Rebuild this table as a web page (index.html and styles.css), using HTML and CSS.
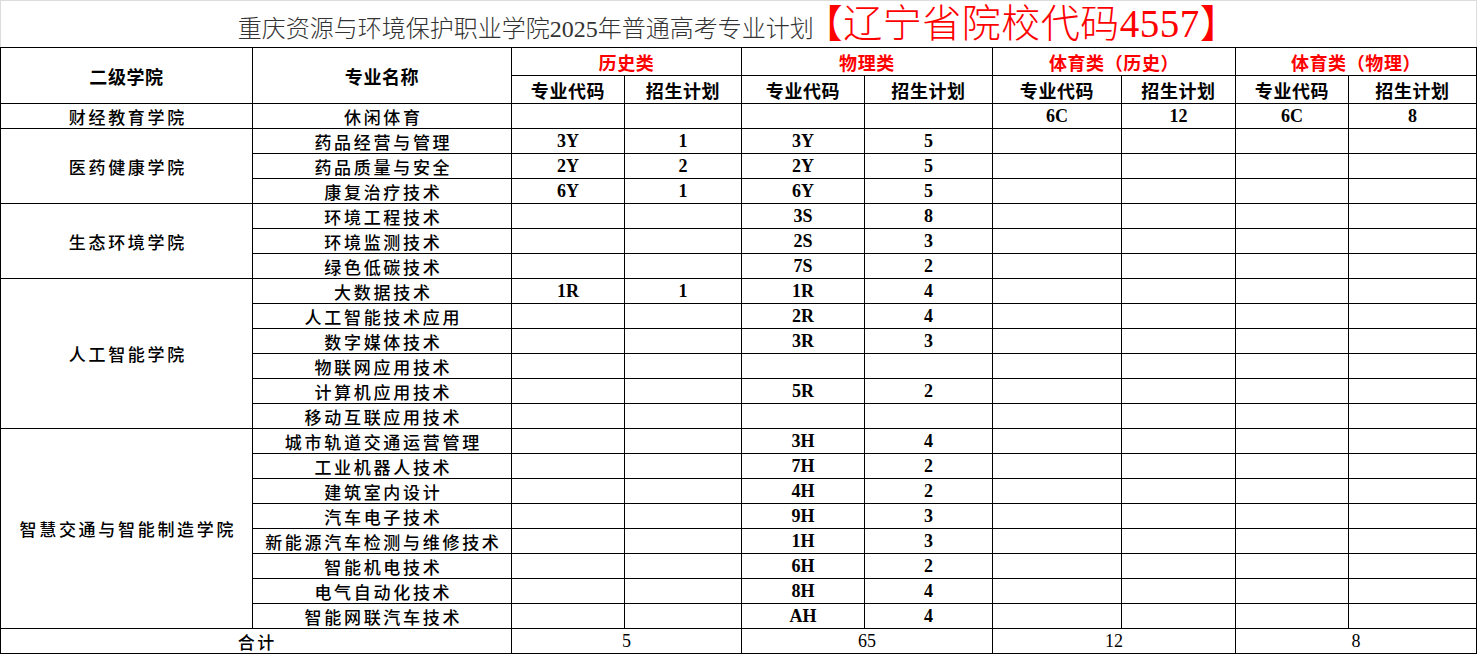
FILE: index.html
```html
<!DOCTYPE html>
<html lang="zh-CN">
<head>
<meta charset="utf-8">
<title>重庆资源与环境保护职业学院2025年普通高考专业计划</title>
<link rel="stylesheet" href="styles.css">
</head>
<body>
<table class="plan">
  <colgroup>
    <col class="c1"><col class="c2"><col class="c3"><col class="c4"><col class="c5">
    <col class="c6"><col class="c7"><col class="c8"><col class="c9"><col class="c10">
  </colgroup>
  <tr class="title-row">
    <td colspan="10" class="title"><div class="title-box"><span class="t-main">重庆资源与环境保护职业学院2025年普通高考专业计划</span><span class="t-red">【辽宁省院校代码4557】</span></div></td>
  </tr>
  <tr class="head">
    <th rowspan="2">二级学院</th>
    <th rowspan="2">专业名称</th>
    <th colspan="2" class="red">历史类</th>
    <th colspan="2" class="red">物理类</th>
    <th colspan="2" class="red">体育类（历史）</th>
    <th colspan="2" class="red">体育类（物理）</th>
  </tr>
  <tr class="head">
    <th>专业代码</th><th>招生计划</th>
    <th>专业代码</th><th>招生计划</th>
    <th>专业代码</th><th>招生计划</th>
    <th>专业代码</th><th>招生计划</th>
  </tr>
  <tr class="row">
    <td class="cn">财经教育学院</td><td class="cn">休闲体育</td>
    <td></td><td></td><td></td><td></td>
    <td class="num">6C</td><td class="num">12</td><td class="num">6C</td><td class="num">8</td>
  </tr>
  <tr class="row">
    <td rowspan="3" class="cn">医药健康学院</td><td class="cn">药品经营与管理</td>
    <td class="num">3Y</td><td class="num">1</td><td class="num">3Y</td><td class="num">5</td>
    <td></td><td></td><td></td><td></td>
  </tr>
  <tr class="row">
    <td class="cn">药品质量与安全</td>
    <td class="num">2Y</td><td class="num">2</td><td class="num">2Y</td><td class="num">5</td>
    <td></td><td></td><td></td><td></td>
  </tr>
  <tr class="row">
    <td class="cn">康复治疗技术</td>
    <td class="num">6Y</td><td class="num">1</td><td class="num">6Y</td><td class="num">5</td>
    <td></td><td></td><td></td><td></td>
  </tr>
  <tr class="row">
    <td rowspan="3" class="cn">生态环境学院</td><td class="cn">环境工程技术</td>
    <td></td><td></td><td class="num">3S</td><td class="num">8</td>
    <td></td><td></td><td></td><td></td>
  </tr>
  <tr class="row">
    <td class="cn">环境监测技术</td>
    <td></td><td></td><td class="num">2S</td><td class="num">3</td>
    <td></td><td></td><td></td><td></td>
  </tr>
  <tr class="row">
    <td class="cn">绿色低碳技术</td>
    <td></td><td></td><td class="num">7S</td><td class="num">2</td>
    <td></td><td></td><td></td><td></td>
  </tr>
  <tr class="row">
    <td rowspan="6" class="cn">人工智能学院</td><td class="cn">大数据技术</td>
    <td class="num">1R</td><td class="num">1</td><td class="num">1R</td><td class="num">4</td>
    <td></td><td></td><td></td><td></td>
  </tr>
  <tr class="row">
    <td class="cn">人工智能技术应用</td>
    <td></td><td></td><td class="num">2R</td><td class="num">4</td>
    <td></td><td></td><td></td><td></td>
  </tr>
  <tr class="row">
    <td class="cn">数字媒体技术</td>
    <td></td><td></td><td class="num">3R</td><td class="num">3</td>
    <td></td><td></td><td></td><td></td>
  </tr>
  <tr class="row">
    <td class="cn">物联网应用技术</td>
    <td></td><td></td><td></td><td></td>
    <td></td><td></td><td></td><td></td>
  </tr>
  <tr class="row">
    <td class="cn">计算机应用技术</td>
    <td></td><td></td><td class="num">5R</td><td class="num">2</td>
    <td></td><td></td><td></td><td></td>
  </tr>
  <tr class="row">
    <td class="cn">移动互联应用技术</td>
    <td></td><td></td><td></td><td></td>
    <td></td><td></td><td></td><td></td>
  </tr>
  <tr class="row">
    <td rowspan="8" class="cn">智慧交通与智能制造学院</td><td class="cn">城市轨道交通运营管理</td>
    <td></td><td></td><td class="num">3H</td><td class="num">4</td>
    <td></td><td></td><td></td><td></td>
  </tr>
  <tr class="row">
    <td class="cn">工业机器人技术</td>
    <td></td><td></td><td class="num">7H</td><td class="num">2</td>
    <td></td><td></td><td></td><td></td>
  </tr>
  <tr class="row">
    <td class="cn">建筑室内设计</td>
    <td></td><td></td><td class="num">4H</td><td class="num">2</td>
    <td></td><td></td><td></td><td></td>
  </tr>
  <tr class="row">
    <td class="cn">汽车电子技术</td>
    <td></td><td></td><td class="num">9H</td><td class="num">3</td>
    <td></td><td></td><td></td><td></td>
  </tr>
  <tr class="row">
    <td class="cn">新能源汽车检测与维修技术</td>
    <td></td><td></td><td class="num">1H</td><td class="num">3</td>
    <td></td><td></td><td></td><td></td>
  </tr>
  <tr class="row">
    <td class="cn">智能机电技术</td>
    <td></td><td></td><td class="num">6H</td><td class="num">2</td>
    <td></td><td></td><td></td><td></td>
  </tr>
  <tr class="row">
    <td class="cn">电气自动化技术</td>
    <td></td><td></td><td class="num">8H</td><td class="num">4</td>
    <td></td><td></td><td></td><td></td>
  </tr>
  <tr class="row">
    <td class="cn">智能网联汽车技术</td>
    <td></td><td></td><td class="num">AH</td><td class="num">4</td>
    <td></td><td></td><td></td><td></td>
  </tr>
  <tr class="row total">
    <td colspan="2" class="cn">合计</td>
    <td colspan="2" class="num thin">5</td>
    <td colspan="2" class="num thin">65</td>
    <td colspan="2" class="num thin">12</td>
    <td colspan="2" class="num thin">8</td>
  </tr>
</table>
</body>
</html>
```

FILE: styles.css
```css
html, body {
  margin: 0;
  padding: 0;
  background: #ffffff;
}

.plan {
  width: 1477px;
  table-layout: fixed;
  border-collapse: collapse;
  font-family: "Noto Sans CJK SC", "Noto Sans", sans-serif;
  color: #000;
}

.c1 { width: 252px; }
.c2 { width: 259px; }
.c3 { width: 113px; }
.c4 { width: 117px; }
.c5 { width: 123px; }
.c6 { width: 128px; }
.c7 { width: 129px; }
.c8 { width: 114px; }
.c9 { width: 113px; }
.c10 { width: 128px; }

.plan td,
.plan th {
  border: 1px solid #000;
  padding: 0;
  text-align: center;
  vertical-align: middle;
  overflow: hidden;
  white-space: nowrap;
}

.title-row {
  height: 47px;
}

.plan td.title {
  border-top: 1px solid #dcdcdc;
  border-left: 1px solid #dcdcdc;
  border-right: 1px solid #dcdcdc;
  border-bottom: 1px solid #000;
  padding: 0;
  vertical-align: top;
  overflow: visible;
}

.title-box {
  height: 44px;
  box-sizing: border-box;
  padding-top: 3px;
  display: flex;
  justify-content: center;
  align-items: baseline;
}

.t-main {
  font-family: "Liberation Serif", "Noto Sans CJK SC", serif;
  font-size: 24px;
  font-weight: 300;
  color: #333333;
  line-height: 1.1;
}

.t-red {
  font-family: "Liberation Serif", "Noto Sans CJK SC", serif;
  font-size: 39px;
  font-weight: 300;
  letter-spacing: 0.5px;
  margin-left: -10px;
  color: #ff0000;
  line-height: 1.05;
}

.head {
  height: 28px;
}

.plan th {
  font-size: 18px;
  font-weight: 700;
  line-height: 26px;
  letter-spacing: 0.6px;
}

.plan th.red {
  color: #ff0000;
}

.row {
  height: 25px;
}

.plan td.cn {
  font-size: 17px;
  line-height: 23px;
  letter-spacing: 2.7px;
  padding-left: 2.7px;
  font-weight: 500;
}

.plan td.num {
  font-family: "Liberation Serif", "Noto Sans CJK SC", serif;
  font-size: 18px;
  font-weight: 700;
  line-height: 23px;
}

.plan td.num.thin {
  font-weight: 400;
}
```
